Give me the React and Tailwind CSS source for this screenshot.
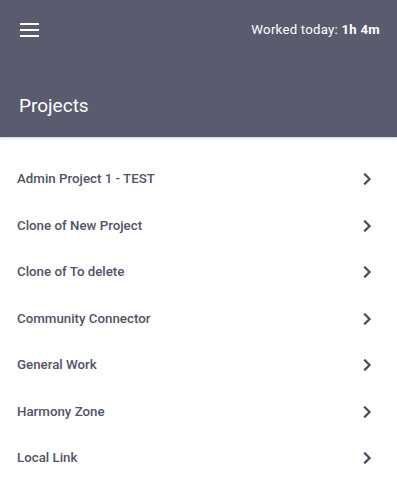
export default function App() {
  const items = [
    "Admin Project 1 - TEST",
    "Clone of New Project",
    "Clone of To delete",
    "Community Connector",
    "General Work",
    "Harmony Zone",
    "Local Link",
  ];
  return (
    <div className="w-[397px] h-[481px] overflow-hidden bg-white" style={{ fontFamily: "Roboto, 'Noto Sans', sans-serif" }}>
      <div className="h-[137px] bg-[#5a5b6f] flex flex-col shadow-[0_1px_2px_rgba(0,0,0,0.2)] relative">
        <div className="flex items-center justify-between h-[60px] pl-[20px] pr-[17px]">
          <div className="flex flex-col gap-[4px] w-[19px]">
            <div className="h-[2px] bg-white" />
            <div className="h-[2px] bg-white" />
            <div className="h-[2px] bg-white" />
          </div>
          <div className="text-[13.2px] text-white tracking-[0.25px]">
            Worked today: <span className="font-bold">1h 4m</span>
          </div>
        </div>
        <div className="flex items-center pl-[19px] pt-[32px]">
          <div className="text-[19px] text-white leading-[28px]">Projects</div>
        </div>
      </div>
      <div className="pt-[19px]">
        {items.map((t) => (
          <div key={t} className="h-[46.5px] flex items-center justify-between pl-[17px] pr-[18px]">
            <span className="text-[13.3px] font-medium text-[#525367]">{t}</span>
            <svg width="24" height="24" viewBox="0 0 24 24" fill="#4b4c61">
              <path d="M10 6L8.59 7.41 13.17 12l-4.58 4.59L10 18l6-6z" stroke="#4b4c61" strokeWidth="0.3" />
            </svg>
          </div>
        ))}
      </div>
    </div>
  );
}
